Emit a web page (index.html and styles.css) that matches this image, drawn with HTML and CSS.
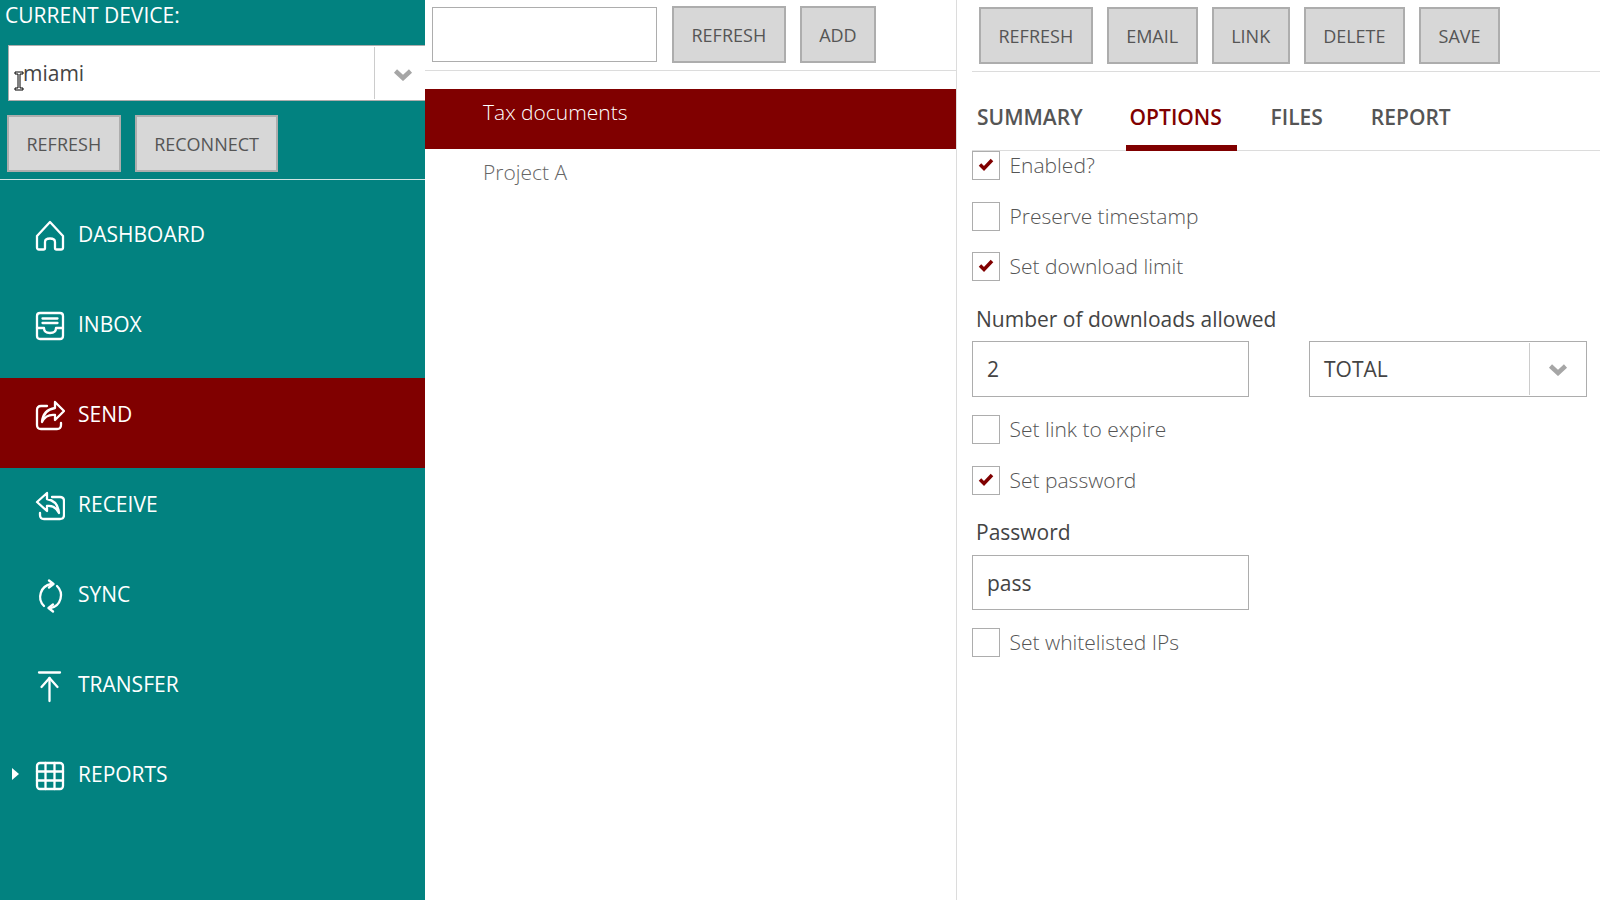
FILE: index.html
```html
<!DOCTYPE html>
<html lang="en">
<head>
    <meta charset="UTF-8">
    <meta name="viewport" content="width=device-width, initial-scale=1.0">
    <title>Send</title>
    <link rel="stylesheet" href="styles.css">
</head>
<body>
    <div class="app">
        <aside class="sidebar">
            <div class="device-title">CURRENT DEVICE:</div>
            <div class="device-select">
                <div class="select-box">
                    <span class="select-value">miami</span>
                    <span class="select-arrow">
                        <svg width="20" height="13" viewBox="0 0 20 13"><path d="M2.5 3 L10 10 L17.5 3" fill="none" stroke="#a6a6a6" stroke-width="4.5"/></svg>
                    </span>
                </div>
                <svg class="text-cursor" width="10" height="20" viewBox="0 0 10 20"><path d="M1 1 H9 V3 H6 V17 H9 V19 H1 V17 H4 V3 H1 Z" fill="#fff" stroke="#000" stroke-width="1"/></svg>
            </div>
            <div class="device-buttons">
                <button class="btn">REFRESH</button>
                <button class="btn">RECONNECT</button>
            </div>
            <nav class="nav">
                <a class="nav-item">
                    <svg class="nav-icon" width="30" height="32" viewBox="0 0 30 32"><path d="M2 17 L15 3 L28 17 V28.500 Q28 30.500 26 30.500 H21.500 Q20 30.500 20 29 V23 Q20 19.500 15 19.500 Q10 19.500 10 23 V29 Q10 30.500 8.500 30.500 H4 Q2 30.500 2 28.500 Z"/></svg>
                    DASHBOARD
                </a>
                <a class="nav-item">
                    <svg class="nav-icon" width="30" height="32" viewBox="0 0 30 32"><path d="M5 4 H25 Q28 4 28 7 V27 Q28 30 25 30 H5 Q2 30 2 27 V7 Q2 4 5 4 Z"/><path d="M7.500 9.500 H22.500 M7.500 14 H22.500"/><path d="M2 19 H9 Q9 24 15 24 Q21 24 21 19 H28"/></svg>
                    INBOX
                </a>
                <a class="nav-item active">
                    <svg class="nav-icon" width="30" height="32" viewBox="0 0 30 32"><path d="M12 7 H6 Q2 7 2 11 V26 Q2 30 6 30 H22 Q26 30 26 26 V24"/><path d="M20 3 L29 12 L20 21 V16 Q11 15 7 23 Q8 11 20 9 Z"/></svg>
                    SEND
                </a>
                <a class="nav-item">
                    <svg class="nav-icon" width="30" height="32" viewBox="0 0 30 32"><path d="M17 8 H25 Q29 8 29 12 V26 Q29 30 25 30 H9 Q5 30 5 26 V24"/><path d="M12 4 L2 13 L12 22 V17 Q20 16 24 24 Q23 12 12 10 Z"/></svg>
                    RECEIVE
                </a>
                <a class="nav-item">
                    <svg class="nav-icon" width="30" height="34" viewBox="0 0 30 34"><path d="M9 27 A13 13 0 0 1 16 5"/><path d="M22 7 A13 13 0 0 1 16 29"/><path d="M14 1.500 L18.500 5 L14 8.500"/><path d="M18 25.500 L13.500 29 L18 32.500"/></svg>
                    SYNC
                </a>
                <a class="nav-item">
                    <svg class="nav-icon" width="30" height="34" viewBox="0 0 30 34"><path d="M4 3.500 H25"/><path d="M14.500 32 V9"/><path d="M6.500 18 L14.500 9 L22.500 18"/></svg>
                    TRANSFER
                </a>
                <a class="nav-item">
                    <span class="nav-caret"></span>
                    <svg class="nav-icon" width="30" height="32" viewBox="0 0 30 32"><rect x="2" y="4" width="26" height="26" rx="3"/><path d="M10.500 4 V30 M19.500 4 V30 M2 12.500 H28 M2 21.500 H28"/></svg>
                    REPORTS
                </a>
            </nav>
        </aside>

        <section class="list-pane">
            <div class="toolbar">
                <input class="search-input" type="text">
                <button class="btn">REFRESH</button>
                <button class="btn">ADD</button>
            </div>
            <ul class="share-list">
                <li class="share-item selected">Tax documents</li>
                <li class="share-item">Project A</li>
            </ul>
        </section>

        <section class="detail-pane">
            <div class="toolbar detail-toolbar">
                <button class="btn">REFRESH</button>
                <button class="btn">EMAIL</button>
                <button class="btn">LINK</button>
                <button class="btn">DELETE</button>
                <button class="btn">SAVE</button>
            </div>
            <div class="tabs">
                <span class="tab">SUMMARY</span>
                <span class="tab active">OPTIONS</span>
                <span class="tab">FILES</span>
                <span class="tab">REPORT</span>
            </div>
            <form class="options">
                <label class="check-row first"><span class="check"><svg width="16" height="14" viewBox="0 0 16 14"><path d="M2 6.500 L6 10.500 L14 2" fill="none" stroke="#800000" stroke-width="3.500"/></svg></span>Enabled?</label>
                <label class="check-row"><span class="check"></span>Preserve timestamp</label>
                <label class="check-row"><span class="check"><svg width="16" height="14" viewBox="0 0 16 14"><path d="M2 6.500 L6 10.500 L14 2" fill="none" stroke="#800000" stroke-width="3.500"/></svg></span>Set download limit</label>
                <div class="field-label downloads-label">Number of downloads allowed</div>
                <div class="field-row">
                    <input class="text-input" type="text" value="2">
                    <div class="select-box total-select">
                        <span class="select-value">TOTAL</span>
                        <span class="select-arrow">
                            <svg width="20" height="13" viewBox="0 0 20 13"><path d="M2.5 3 L10 10 L17.5 3" fill="none" stroke="#a6a6a6" stroke-width="4.5"/></svg>
                        </span>
                    </div>
                </div>
                <label class="check-row after-field"><span class="check"></span>Set link to expire</label>
                <label class="check-row"><span class="check"><svg width="16" height="14" viewBox="0 0 16 14"><path d="M2 6.500 L6 10.500 L14 2" fill="none" stroke="#800000" stroke-width="3.500"/></svg></span>Set password</label>
                <div class="field-label password-label">Password</div>
                <input class="text-input password-input" type="text" value="pass">
                <label class="check-row after-field"><span class="check"></span>Set whitelisted IPs</label>
            </form>
        </section>
    </div>
</body>
</html>
```

FILE: styles.css
```css
* {
    box-sizing: border-box;
}
body {
    margin: 0;
    background-color: #fff;
    color: #444;
    font-family: "Open Sans", sans-serif;
}
.app {
    display: flex;
    height: 900px;
    overflow: hidden;
}
.btn {
    height: 57px;
    padding: 0 17.5px;
    background-color: #d7d7d7;
    border: 2px solid #adadad;
    color: #555;
    font-family: "Open Sans", sans-serif;
    font-size: 18px;
}

/* sidebar */
.sidebar {
    flex: 0 0 425px;
    width: 425px;
    background-color: #028280;
    color: #fff;
    overflow: hidden;
}
.device-title {
    height: 45px;
    padding: 1px 0 0 5px;
    font-size: 21px;
    line-height: 28px;
}
.device-select {
    position: relative;
    width: 450px;
    padding-left: 8px;
}
.text-cursor {
    position: absolute;
    left: 14px;
    top: 26px;
}
.select-box {
    display: flex;
    height: 56px;
    background-color: #fff;
    border: 1px solid #adadad;
    color: #444;
}
.select-value {
    flex: 1;
    padding-left: 14px;
    font-size: 21px;
    line-height: 55px;
}
.device-select .select-box {
    width: 442px;
}
.device-select .select-value {
    line-height: 54px;
}
.select-arrow {
    display: flex;
    align-items: center;
    justify-content: center;
    width: 57px;
    margin: 1px 0;
    border-left: 1px solid #ccc;
}
.device-select .select-arrow {
    width: 75px;
    padding-right: 18px;
    padding-top: 2px;
}
.device-buttons {
    display: flex;
    gap: 14px;
    height: 64px;
    padding: 14px 0 0 7px;
    box-sizing: content-box;
    border-bottom: 1px solid #cfe5e4;
}
.nav {
    padding-top: 18px;
}
.nav-item {
    position: relative;
    display: flex;
    align-items: flex-start;
    height: 90px;
    padding: 21px 0 0 35px;
    font-size: 21px;
    line-height: 30px;
    gap: 13px;
}
.nav-item.active {
    background-color: #800000;
}
.nav-icon {
    flex: none;
    fill: none;
    stroke: #fff;
    stroke-width: 2.3;
    stroke-linejoin: round;
    stroke-linecap: round;
}
.nav-caret {
    position: absolute;
    left: 12px;
    top: 30px;
    border-left: 7px solid #fff;
    border-top: 6px solid transparent;
    border-bottom: 6px solid transparent;
}

/* middle list */
.list-pane {
    flex: 0 0 532px;
    border-right: 1px solid #dcdcdc;
}
.toolbar {
    display: flex;
    align-items: flex-start;
    gap: 14px;
    height: 71px;
    padding-top: 6px;
    border-bottom: 1px solid #dcdcdc;
}
.search-input {
    width: 225px;
    height: 55px;
    margin: 1px 1px 0 7px;
    background-color: #fff;
    border: 1px solid #adadad;
}
.share-list {
    list-style: none;
    margin: 18px 0 0;
    padding: 0;
}
.share-item {
    height: 60px;
    padding: 8px 0 0 58px;
    color: #666;
    font-size: 21px;
    font-weight: 300;
    line-height: 30px;
}
.share-item.selected {
    background-color: #800000;
    color: #fff;
}

/* detail */
.detail-pane {
    flex: 1;
    padding-left: 15px;
    min-width: 0;
}
.detail-toolbar {
    height: 72px;
    padding: 7px 0 0 7px;
}
.tabs {
    display: flex;
    height: 79px;
    border-bottom: 1px solid #dcdcdc;
    padding-top: 27px;
}
.tab {
    height: 52px;
    padding-left: 5px;
    margin-right: 43px;
    color: #555;
    font-size: 21px;
    font-weight: 600;
    line-height: 36px;
}
.tab.active {
    width: 111px;
    padding-left: 4px;
    margin-right: 29px;
    border-bottom: 6px solid #800000;
    color: #800000;
}
.options {
    display: flex;
    flex-direction: column;
    align-items: flex-start;
}
.check-row {
    display: flex;
    align-items: flex-start;
    gap: 9.5px;
    height: 29px;
    margin-top: 21.5px;
    color: #555;
    font-size: 21px;
    font-weight: 300;
    line-height: 28px;
}
.check-row.first {
    margin-top: 0;
}
.check-row.after-field {
    margin-top: 18px;
}
.check {
    display: flex;
    align-items: center;
    justify-content: center;
    width: 28px;
    height: 29px;
    padding-bottom: 1px;
    background-color: #fff;
    border: 1px solid #adadad;
}
.field-label {
    padding-left: 4px;
    color: #444;
    font-size: 21px;
    line-height: 30px;
}
.downloads-label {
    margin-top: 23px;
    margin-bottom: 7px;
}
.password-label {
    margin-top: 22.5px;
    margin-bottom: 8px;
}
.field-row {
    display: flex;
    gap: 60px;
}
.text-input {
    width: 277px;
    height: 56px;
    padding: 0 14px;
    background-color: #fff;
    border: 1px solid #adadad;
    color: #444;
    font-family: "Open Sans", sans-serif;
    font-size: 21px;
}
.password-input {
    height: 55px;
}
.total-select {
    width: 278px;
    height: 56px;
}
```
